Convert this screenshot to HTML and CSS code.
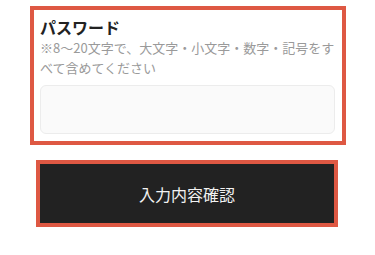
FILE: index.html
```html
<!DOCTYPE html>
<html lang="ja">
<head>
  <meta charset="UTF-8" />
  <meta name="viewport" content="width=device-width, initial-scale=1" />
  <title>パスワード</title>
  <link rel="stylesheet" href="styles.css">
</head>
<body>

  <div class="field">
    <label class="field-label" for="password">パスワード</label>
    <p class="field-note">※8〜20文字で、大文字・小文字・数字・記号をすべて含めてください</p>
    <input class="field-input" id="password" type="password">
  </div>

  <div class="submit-wrap">
    <button class="submit-btn">入力内容確認</button>
  </div>

</body>
</html>
```

FILE: styles.css
```css
body {
  margin: 0;
  font-family: "Noto Sans CJK JP", "Noto Sans", sans-serif;
  background: #fff;
  color: #222;
}
.field {
  width: 316px;
  box-sizing: border-box;
  margin: 6px 0 0 30px;
  padding: 6px 7px 7px 6px;
  border: 4px solid #de5843;
}
.field-label {
  display: block;
  font-size: 16px;
  font-weight: bold;
  line-height: 22px;
}
.field-note {
  margin: 0;
  font-size: 13px;
  line-height: 20px;
  color: #9a9a9a;
}
.field-input {
  display: block;
  width: 100%;
  box-sizing: border-box;
  height: 49px;
  margin-top: 7px;
  background: #fafafa;
  border: 1px solid #ececec;
  border-radius: 6px;
}
.submit-wrap {
  padding: 15px 37px 0 36px;
}
.submit-btn {
  display: block;
  width: 100%;
  height: 67px;
  box-sizing: border-box;
  border: 4px solid #de5843;
  background: #222;
  color: #f2f2f2;
  font-family: inherit;
  font-size: 16px;
}
```
